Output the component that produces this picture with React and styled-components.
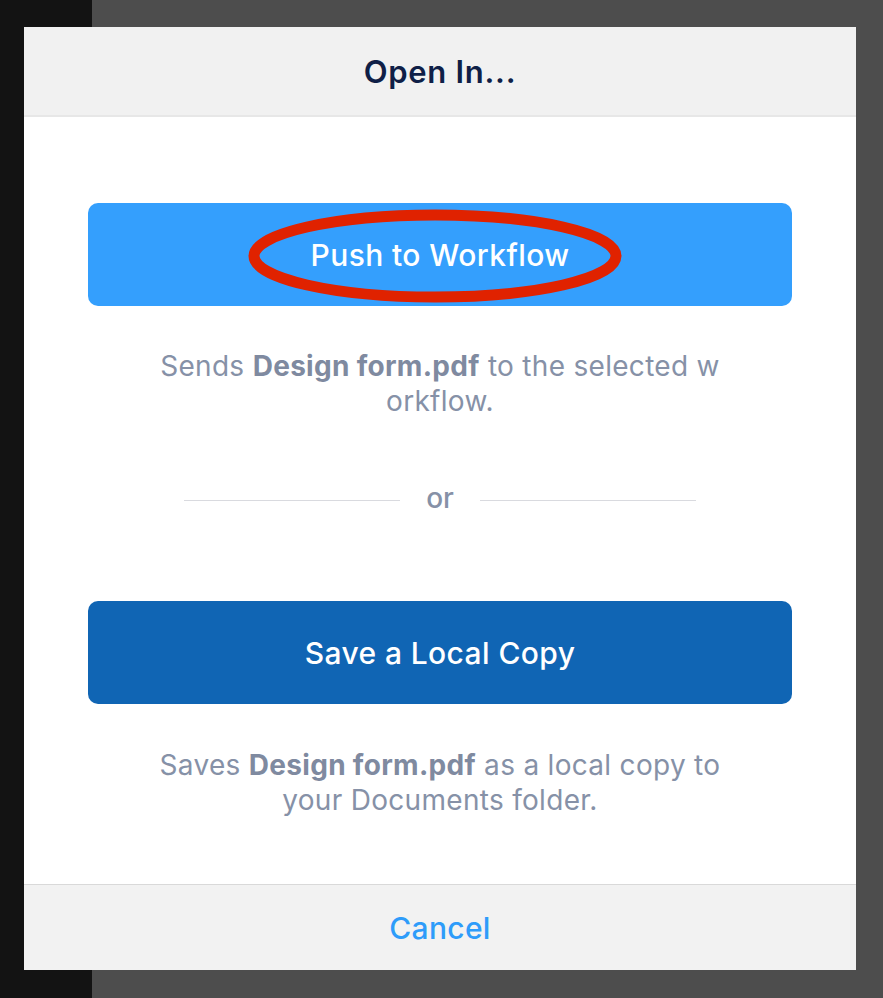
import React from 'react';
import styled, { createGlobalStyle } from 'styled-components';

const GlobalStyle = createGlobalStyle`
    html, body {
        margin: 0;
        padding: 0;
    }
    body {
        font-family: Inter, "Liberation Sans", Arial, sans-serif;
        -webkit-font-smoothing: antialiased;
    }
`;

const Page = styled.div`
    width: 883px;
    height: 998px;
    box-sizing: border-box;
    padding: 27px 27px 28px 24px;
    background: linear-gradient(to right, #131313 92px, #4d4d4d 92px);
`;

const Dialog = styled.div`
    width: 832px;
    height: 943px;
    display: flex;
    flex-direction: column;
    background: #ffffff;
`;

const Header = styled.div`
    height: 88px;
    flex-shrink: 0;
    display: flex;
    align-items: center;
    justify-content: center;
    background: #f1f1f1;
    border-bottom: 2px solid #e7e7e7;
`;

const Title = styled.h1`
    margin: 0;
    font-size: 31px;
    font-weight: 600;
    color: #0f1f47;
    letter-spacing: 0.7px;
`;

const Body = styled.div`
    flex: 1;
    display: flex;
    flex-direction: column;
    align-items: stretch;
    padding: 86px 64px 0;
`;

const ActionButton = styled.button`
    position: relative;
    height: 103px;
    border: none;
    border-radius: 10px;
    background: ${(p) => (p.$dark ? '#1065b4' : '#349ffd')};
    color: #ffffff;
    font-family: inherit;
    font-size: 30px;
    font-weight: 500;
    letter-spacing: 0.4px;
    cursor: pointer;
`;

const Highlight = styled.svg`
    position: absolute;
    left: 0;
    top: 0;
    width: 100%;
    height: 100%;
    pointer-events: none;
`;

const Description = styled.p`
    margin: ${(p) => p.$mt}px 0 0;
    text-align: center;
    font-size: 28px;
    line-height: 35px;
    letter-spacing: 0.3px;
    color: #8691a7;

    b {
        font-weight: 700;
        color: #7f8aa0;
    }
`;

const Divider = styled.div`
    margin: 64px auto 0;
    width: 512px;
    height: 35px;
    display: grid;
    grid-template-columns: 1fr 80px 1fr;
    align-items: center;
`;

const Rule = styled.span`
    height: 1px;
    background: #d9dadf;
`;

const Or = styled.span`
    text-align: center;
    font-size: 28px;
    font-weight: 500;
    color: #8691a7;
    line-height: 35px;
    transform: translateY(-2px);
`;

const Footer = styled.div`
    height: 86px;
    box-sizing: border-box;
    padding-top: 1px;
    flex-shrink: 0;
    display: flex;
    align-items: center;
    justify-content: center;
    background: #f2f2f2;
    border-top: 1px solid #d9d9d9;
`;

const CancelButton = styled.button`
    border: none;
    background: none;
    font-family: inherit;
    font-size: 30px;
    font-weight: 500;
    letter-spacing: 0.3px;
    color: #2e9cfa;
    cursor: pointer;
`;

const App = () => {
    return (
        <>
            <GlobalStyle />
            <Page>
                <Dialog>
                    <Header>
                        <Title>Open In...</Title>
                    </Header>
                    <Body>
                        <ActionButton>
                            Push to Workflow
                            <Highlight viewBox="0 0 704 103">
                                <ellipse cx="347" cy="53" rx="181" ry="41" fill="none" stroke="#e02200" strokeWidth="11" />
                            </Highlight>
                        </ActionButton>
                        <Description $mt={43}>
                            Sends <b>Design form.pdf</b> to the selected w<br />orkflow.
                        </Description>
                        <Divider>
                            <Rule />
                            <Or>or</Or>
                            <Rule />
                        </Divider>
                        <ActionButton $dark style={{ marginTop: 83 }}>Save a Local Copy</ActionButton>
                        <Description $mt={44}>
                            Saves <b>Design form.pdf</b> as a local copy to<br />your Documents folder.
                        </Description>
                    </Body>
                    <Footer>
                        <CancelButton>Cancel</CancelButton>
                    </Footer>
                </Dialog>
            </Page>
        </>
    );
};

export default App;
